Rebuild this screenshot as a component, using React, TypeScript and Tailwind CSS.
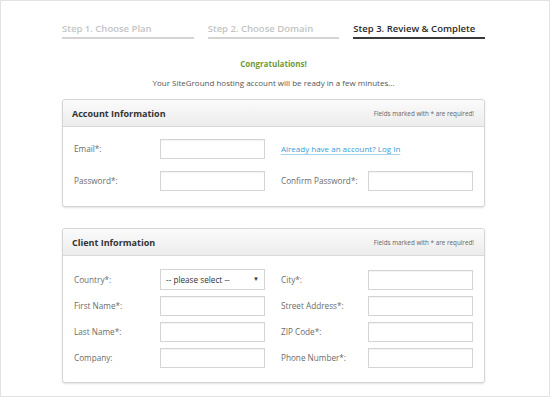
import React from 'react';

const Field = () => (
  <div className="h-[20px] w-[105px] border border-[#d4d4d4] bg-white shadow-[inset_0_1px_1px_rgba(0,0,0,0.05)]" />
);

const Label = ({ children }: { children: React.ReactNode }) => (
  <div className="text-[8.2px] text-[#6b6b6b] leading-[20px]">{children}</div>
);

const Panel = ({ title, children }: { title: string; children: React.ReactNode }) => (
  <div className="rounded-[3px] border border-[#d6d6d6] bg-white shadow-[0_1px_2px_rgba(0,0,0,0.12)]">
    <div className="flex h-[27px] items-center justify-between rounded-t-[3px] border-b border-[#d9d9d9] bg-gradient-to-b from-[#fbfbfb] to-[#ececec] pl-[9px] pr-[10px]">
      <span className="text-[9px] font-bold text-[#333]">{title}</span>
      <span className="text-[6.3px] text-[#666]">Fields marked with * are required!</span>
    </div>
    {children}
  </div>
);

export default function App() {
  return (
    <div className="h-[397px] w-[550px] border border-[#e3e3e3] bg-white" style={{ fontFamily: '"Open Sans", sans-serif' }}>
      <div className="ml-[61px] w-[423px] pt-[21px]">
        {/* Steps */}
        <div className="grid grid-cols-3 gap-[14px]">
          <div className="border-b-2 border-[#d3d3d3] pb-[1px] text-[9.5px] font-semibold text-[#c4c4c4]">Step 1. Choose Plan</div>
          <div className="border-b-2 border-[#d3d3d3] pb-[1px] text-[9.5px] font-semibold text-[#c4c4c4]">Step 2. Choose Domain</div>
          <div className="border-b-2 border-[#3a3a3a] pb-[1px] text-[9.5px] font-semibold text-[#2b2b2b]">Step 3. Review &amp; Complete</div>
        </div>

        <div className="mt-[19px] text-center text-[8px] font-bold text-[#6f9a3c]">Congratulations!</div>
        <div className="mt-[7px] text-center text-[8px] text-[#555]">Your SiteGround hosting account will be ready in a few minutes...</div>

        {/* Account */}
        <div className="mt-[10px]">
          <Panel title="Account Information">
            <div className="flex flex-col gap-[12px] pl-[11px] pt-[12px] pb-[15px]">
              <div className="grid grid-cols-[86px_105px_16px_87px_105px] items-center">
                <Label>Email*:</Label>
                <Field />
                <div />
                <a className="col-span-2 text-[8px] text-[#3b9bd3] underline decoration-[#a9d3ee] underline-offset-2">Already have an account? Log In</a>
              </div>
              <div className="grid grid-cols-[86px_105px_16px_87px_105px] items-center">
                <Label>Password*:</Label>
                <Field />
                <div />
                <Label>Confirm Password*:</Label>
                <Field />
              </div>
            </div>
          </Panel>
        </div>

        {/* Client */}
        <div className="mt-[21px]">
          <Panel title="Client Information">
            <div className="flex flex-col gap-[6px] pl-[11px] pt-[13px] pb-[14px]">
              <div className="grid grid-cols-[86px_105px_16px_87px_105px] items-center">
                <Label>Country*:</Label>
                <div className="flex h-[21px] w-[105px] items-center justify-between border border-[#d4d4d4] bg-white px-[5px] text-[8.2px] text-[#333]">
                  <span>-- please select --</span>
                  <span className="text-[6px]">▼</span>
                </div>
                <div />
                <Label>City*:</Label>
                <Field />
              </div>
              <div className="grid grid-cols-[86px_105px_16px_87px_105px] items-center">
                <Label>First Name*:</Label>
                <Field />
                <div />
                <Label>Street Address*:</Label>
                <Field />
              </div>
              <div className="grid grid-cols-[86px_105px_16px_87px_105px] items-center">
                <Label>Last Name*:</Label>
                <Field />
                <div />
                <Label>ZIP Code*:</Label>
                <Field />
              </div>
              <div className="grid grid-cols-[86px_105px_16px_87px_105px] items-center">
                <Label>Company:</Label>
                <Field />
                <div />
                <Label>Phone Number*:</Label>
                <Field />
              </div>
            </div>
          </Panel>
        </div>
      </div>
    </div>
  );
}
